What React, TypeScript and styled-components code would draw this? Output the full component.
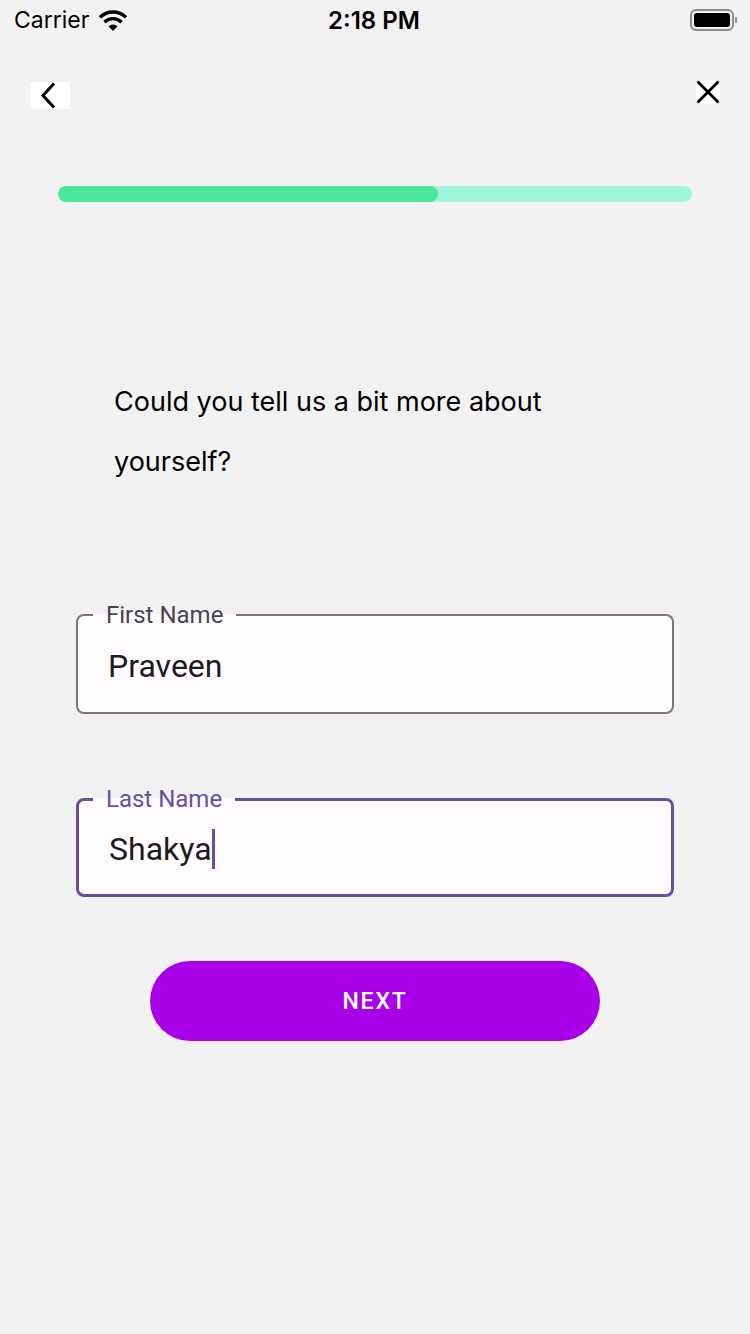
import styled, { createGlobalStyle } from "styled-components";

const GlobalStyle = createGlobalStyle`
  html, body {
    margin: 0;
    padding: 0;
    background-color: #f2f2f2;
  }
  * {
    box-sizing: border-box;
  }
`;

const Screen = styled.div`
  width: 750px;
  min-height: 1334px;
  background-color: #f2f2f2;
  display: flex;
  flex-direction: column;
  font-family: Inter, "Liberation Sans", sans-serif;
`;

const StatusBar = styled.div`
  height: 40px;
  padding: 0 12px 0 14px;
  display: grid;
  grid-template-columns: 1fr auto 1fr;
  align-items: center;
  color: #000;
`;

const Carrier = styled.div`
  display: flex;
  align-items: center;
  gap: 8px;
  font-size: 23px;
  font-weight: 400;
`;

const Clock = styled.div`
  font-size: 24px;
  font-weight: 600;
  margin-left: -4px;
`;

const Battery = styled.div`
  display: flex;
  justify-content: flex-end;
`;

const NavRow = styled.div`
  margin-top: 40px;
  height: 30px;
  padding: 0 30px 0 30px;
  display: flex;
  justify-content: space-between;
  align-items: flex-start;
`;

const IconButton = styled.button<{ $w: number; $h: number; $offset?: number }>`
  width: ${(p) => p.$w}px;
  height: ${(p) => p.$h}px;
  margin-top: ${(p) => p.$offset ?? 0}px;
  padding: 0;
  border: none;
  background-color: #ffffff;
  display: flex;
  align-items: center;
  justify-content: center;
  cursor: pointer;
`;

const ProgressTrack = styled.div`
  margin: 76px 58px 0 58px;
  height: 16px;
  border-radius: 8px;
  background-color: #9ef5d9;
  overflow: hidden;
`;

const ProgressFill = styled.div`
  height: 100%;
  border-radius: 8px;
  background-color: #4de59c;
`;

const Question = styled.p`
  margin: 170px 0 0 114px;
  width: 480px;
  font-size: 27px;
  line-height: 60px;
  font-weight: 400;
  color: #000;
`;

const Form = styled.div`
  margin: 110px 76px 0 76px;
  display: flex;
  flex-direction: column;
  gap: 72px;
`;

const Field = styled.fieldset<{ $focused?: boolean }>`
  margin: 0;
  padding: 0 0 8px 30px;
  border: ${(p) => (p.$focused ? "3px solid #6750a4" : "2px solid #79747e")};
  border-radius: 8px;
  background-color: #fffbfe;
  min-width: 0;
`;

const Label = styled.legend<{ $focused?: boolean }>`
  margin-left: ${(p) => (p.$focused ? "-16px" : "-15px")};
  padding: 0 13px;
  font-family: Roboto, "Liberation Sans", sans-serif;
  font-size: 24px;
  line-height: 26px;
  color: ${(p) => (p.$focused ? "#6750a4" : "#49454f")};
`;

const Value = styled.div<{ $focused?: boolean }>`
  height: ${(p) => (p.$focused ? 74 : 76)}px;
  display: flex;
  align-items: center;
  font-family: Roboto, "Liberation Sans", sans-serif;
  font-size: 32px;
  color: #1c1b1f;
`;

const Caret = styled.span`
  display: inline-block;
  width: 3px;
  height: 40px;
  background-color: #6750a4;
`;

const NextButton = styled.button`
  margin: 64px auto 0 auto;
  width: 450px;
  height: 80px;
  border: none;
  border-radius: 40px;
  background-color: #a800e8;
  color: #ffffff;
  font-family: Roboto, "Liberation Sans", sans-serif;
  font-size: 23px;
  font-weight: 500;
  letter-spacing: 1.8px;
  cursor: pointer;
`;

const WifiIcon = () => (
  <svg width="32" height="24" viewBox="0 0 32 24">
    <path d="M16 23 L11.5 18.2 A6.5 6.5 0 0 1 20.5 18.2 Z" fill="#000" />
    <path
      d="M7.5 14.2 A12 12 0 0 1 24.5 14.2"
      stroke="#000"
      strokeWidth="3.4"
      fill="none"
    />
    <path
      d="M3 9.4 A18.5 18.5 0 0 1 29 9.4"
      stroke="#000"
      strokeWidth="3.4"
      fill="none"
    />
  </svg>
);

const BatteryIcon = () => (
  <svg width="48" height="22" viewBox="0 0 48 22">
    <rect x="1" y="1" width="42" height="20" rx="5" fill="none" stroke="#8e8e8e" strokeWidth="2" />
    <rect x="4" y="4" width="36" height="14" rx="3" fill="#000" />
    <rect x="45" y="8" width="2" height="6" rx="1" fill="#8e8e8e" />
  </svg>
);

export default function App() {
  const progress = 60;

  return (
    <>
      <GlobalStyle />
      <Screen>
        <StatusBar>
          <Carrier>
            Carrier
            <WifiIcon />
          </Carrier>
          <Clock>2:18 PM</Clock>
          <Battery>
            <BatteryIcon />
          </Battery>
        </StatusBar>

        <NavRow>
          <IconButton $w={40} $h={27} $offset={2} aria-label="Back">
            <svg width="20" height="27" viewBox="0 0 20 27">
              <path d="M14 1.5 L3 13.5 L14 25.5" stroke="#000" strokeWidth="3" fill="none" />
            </svg>
          </IconButton>
          <IconButton $w={24} $h={24} aria-label="Close">
            <svg width="24" height="24" viewBox="0 0 24 24">
              <path d="M1.5 1.5 L22.5 22.5 M22.5 1.5 L1.5 22.5" stroke="#000" strokeWidth="2.8" fill="none" />
            </svg>
          </IconButton>
        </NavRow>

        <ProgressTrack>
          <ProgressFill style={{ width: `${progress}%` }} />
        </ProgressTrack>

        <Question>Could you tell us a bit more about yourself?</Question>

        <Form>
          <Field>
            <Label>First Name</Label>
            <Value>Praveen</Value>
          </Field>
          <Field $focused>
            <Label $focused>Last Name</Label>
            <Value $focused>
              Shakya
              <Caret />
            </Value>
          </Field>
        </Form>

        <NextButton>NEXT</NextButton>
      </Screen>
    </>
  );
}
